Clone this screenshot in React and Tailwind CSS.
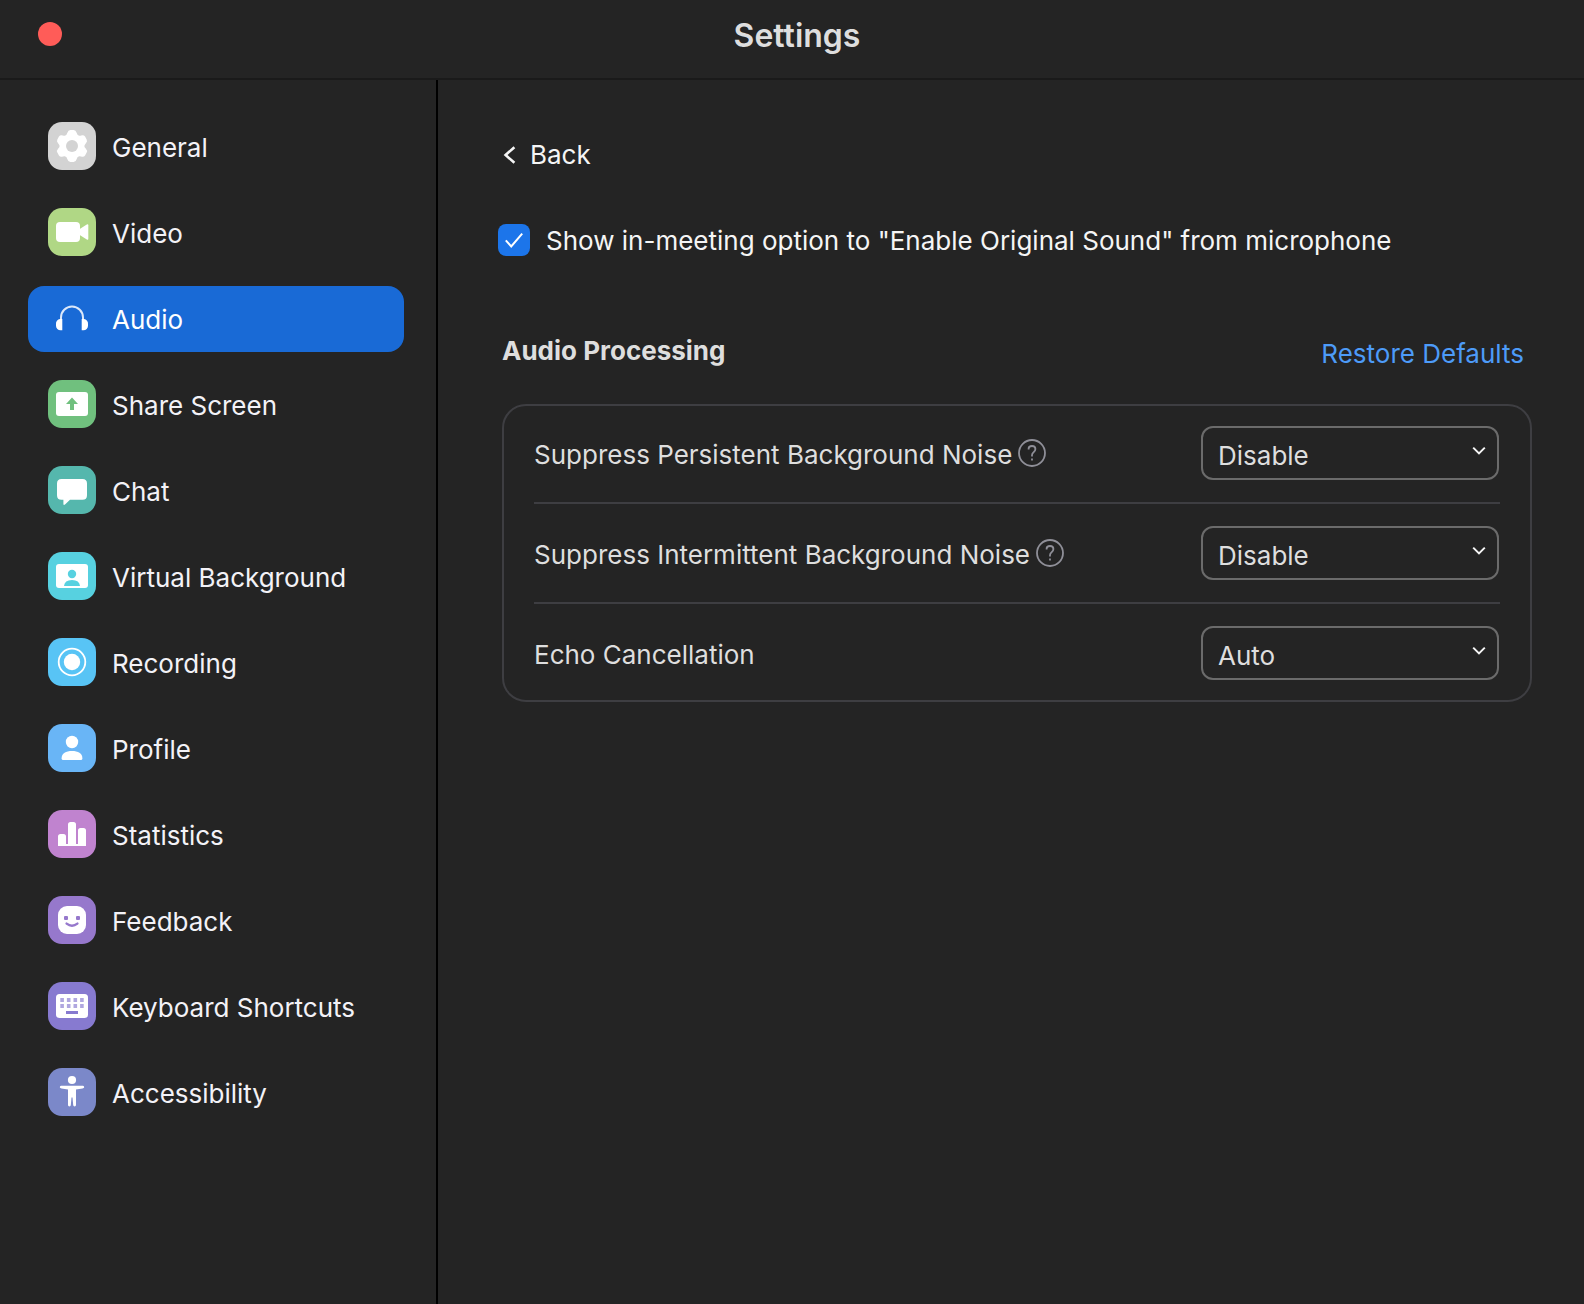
import React, { useState } from "react";

const navItems = [
  { name: "General", color: "bg-[#d3d3d3]", icon: GeneralIcon },
  { name: "Video", color: "bg-[#b0d785]", icon: VideoIcon },
  { name: "Audio", color: "bg-transparent", icon: AudioIcon },
  { name: "Share Screen", color: "bg-[#70c07e]", icon: ShareIcon },
  { name: "Chat", color: "bg-[#55b7ad]", icon: ChatIcon },
  { name: "Virtual Background", color: "bg-[#57d1e0]", icon: BackgroundIcon },
  { name: "Recording", color: "bg-[#58c4f5]", icon: RecordingIcon },
  { name: "Profile", color: "bg-[#69b5f6]", icon: ProfileIcon },
  { name: "Statistics", color: "bg-[#c083cf]", icon: StatisticsIcon },
  { name: "Feedback", color: "bg-[#9678cc]", icon: FeedbackIcon },
  { name: "Keyboard Shortcuts", color: "bg-[#877ad0]", icon: KeyboardIcon },
  { name: "Accessibility", color: "bg-[#7b88c9]", icon: AccessibilityIcon },
];

const audioOptions = [
  {
    id: "persistent-noise",
    label: "Suppress Persistent Background Noise",
    help: true,
    choices: ["Disable", "Auto", "Moderate", "Aggressive"],
  },
  {
    id: "intermittent-noise",
    label: "Suppress Intermittent Background Noise",
    help: true,
    choices: ["Disable", "Auto", "Moderate", "Aggressive"],
  },
  {
    id: "echo-cancellation",
    label: "Echo Cancellation",
    help: false,
    choices: ["Auto", "Aggressive"],
  },
];

const defaultValues = {
  "persistent-noise": "Disable",
  "intermittent-noise": "Disable",
  "echo-cancellation": "Auto",
};

function Icon({ children }) {
  return (
    <svg className="h-12 w-12" viewBox="0 0 48 48" fill="white" aria-hidden="true">
      {children}
    </svg>
  );
}

function GeneralIcon() {
  return (
    <Icon>
      {[0, 60, 120, 180, 240, 300].map((angle) => (
        <path
          key={angle}
          transform={`rotate(${angle} 24 24)`}
          d="M16.5 14.5 Q18.8 13.2 19.4 10.8 Q20.2 8 22.4 8 H25.6 Q27.8 8 28.6 10.8 Q29.2 13.2 31.5 14.5 L24 24 Z"
        />
      ))}
      <circle cx="24" cy="24" r="12" />
      <circle cx="24" cy="24" r="6" fill="#d3d3d3" />
    </Icon>
  );
}

function VideoIcon() {
  return (
    <Icon>
      <rect x="8" y="14" width="24" height="20" rx="4" />
      <path d="M31 21.5 L38.8 16.5 Q40.3 15.6 40.3 17.2 V30.8 Q40.3 32.4 38.8 31.5 L31 26.5 Z" />
    </Icon>
  );
}

function AudioIcon() {
  return (
    <Icon>
      <path
        d="M13 26 V23.5 A11 11 0 0 1 35 23.5 V26"
        fill="none"
        stroke="#dbe8fa"
        strokeWidth="2"
      />
      <path d="M14.3 25 V36.2 H12.5 A4.5 4.5 0 0 1 8 31.7 V30 A4.5 4.5 0 0 1 12 25 Z" />
      <path d="M33.7 25 V36.2 H35.5 A4.5 4.5 0 0 0 40 31.7 V30 A4.5 4.5 0 0 0 36 25 Z" />
    </Icon>
  );
}

function ShareIcon() {
  return (
    <Icon>
      <rect x="8" y="12" width="32" height="24" rx="3" />
      <path d="M24 17.5 L30 24 H26 V30 H22 V24 H18 Z" fill="#70c07e" />
    </Icon>
  );
}

function ChatIcon() {
  return (
    <Icon>
      <path d="M13.5 13 H34.5 Q39 13 39 17.5 V29.3 Q39 33.8 34.5 33.8 H22 L17 38.6 Q15.4 39.8 15.4 37.8 V33.8 H13.5 Q9 33.8 9 29.3 V17.5 Q9 13 13.5 13 Z" />
    </Icon>
  );
}

function BackgroundIcon() {
  return (
    <Icon>
      <rect x="8" y="12" width="32" height="24" rx="3" />
      <circle cx="24" cy="22" r="4.2" fill="#57d1e0" />
      <path d="M16 34 Q16.5 28 24 28 Q31.5 28 32 34 Z" fill="#57d1e0" />
    </Icon>
  );
}

function RecordingIcon() {
  return (
    <Icon>
      <circle cx="24" cy="24" r="13.3" fill="none" stroke="white" strokeWidth="1.8" />
      <circle cx="24" cy="24" r="8.2" />
    </Icon>
  );
}

function ProfileIcon() {
  return (
    <Icon>
      <circle cx="24" cy="18" r="6.2" />
      <path d="M13.6 34.4 C13.6 29 18 27 24 27 C30 27 34.4 29 34.4 34.4 Q34.4 36 32.8 36 H15.2 Q13.6 36 13.6 34.4 Z" />
    </Icon>
  );
}

function StatisticsIcon() {
  return (
    <Icon>
      <path d="M10 36 V26.5 Q10 24 12.5 24 H15.5 Q18 24 18 26.5 V34 H20 V14.5 Q20 12 22.5 12 H25.5 Q28 12 28 14.5 V34 H30 V20.5 Q30 18 32.5 18 H35.5 Q38 18 38 20.5 V36 Z" />
    </Icon>
  );
}

function FeedbackIcon() {
  return (
    <Icon>
      <rect x="10" y="10" width="28" height="28" rx="9" />
      <rect x="16" y="20" width="4" height="4" rx="1" fill="#9678cc" />
      <rect x="28" y="20" width="4" height="4" rx="1" fill="#9678cc" />
      <path
        d="M18.6 27.6 Q24 31.8 29.4 27.6"
        fill="none"
        stroke="#9678cc"
        strokeWidth="2.4"
        strokeLinecap="round"
      />
    </Icon>
  );
}

function KeyboardIcon() {
  return (
    <Icon>
      <rect x="8" y="12" width="32" height="24" rx="3.5" />
      <g fill="#b0a7e0">
        {[16, 22].map((y) =>
          [12.3, 18.9, 25.5, 32.1].map((x) => (
            <rect key={`${x}-${y}`} x={x} y={y} width="3.6" height="4" />
          ))
        )}
      </g>
      <rect x="18" y="29" width="12" height="3" fill="#877ad0" />
    </Icon>
  );
}

function AccessibilityIcon() {
  return (
    <Icon>
      <circle cx="24" cy="12" r="4.1" />
      <path d="M13 17.8 H35 Q36.2 18 36.2 19.2 Q36 20.2 34.5 20.4 L28 21.6 V37 Q28 38.4 26.6 38.4 Q25.2 38.4 25.2 37 L24.5 29.5 H23.5 L22.8 37 Q22.8 38.4 21.4 38.4 Q20 38.4 20 37 V21.6 L13.5 20.4 Q12 20.2 11.8 19.2 Q11.8 18 13 17.8 Z" />
    </Icon>
  );
}

function HelpIcon() {
  return (
    <svg
      className="h-7 w-7"
      viewBox="0 0 28 28"
      fill="none"
      stroke="#8f8f98"
      strokeWidth="1.8"
      aria-hidden="true"
    >
      <circle cx="14" cy="14" r="13" />
      <path d="M10.6 10.6 V9.8 Q10.6 7 14 7 Q17.4 7 17.4 10 Q17.4 12 15.6 13.2 Q14 14.3 14 16.2 V17.4" />
      <path d="M14 19.6 V21.6" />
    </svg>
  );
}

export default function App() {
  const [active, setActive] = useState("Audio");
  const [originalSound, setOriginalSound] = useState(true);
  const [values, setValues] = useState(defaultValues);

  const handleChange = (id, value) => {
    setValues((prev) => ({ ...prev, [id]: value }));
  };

  return (
    <div className="min-h-screen flex flex-col bg-[#242424] font-['Inter',sans-serif] text-[26px] leading-8 text-[#f3f2f7]">
      {/* Title bar */}
      <header className="flex items-center border-b-2 border-[#1a1a1a] pl-[38px] pr-[52px] pt-3 pb-[22px]">
        <button aria-label="Close" className="h-6 w-6 rounded-full bg-[#ff5c58]" />
        <h1 className="flex-1 pt-1 text-center text-[32px] leading-10 font-semibold text-[#dedede]">
          Settings
        </h1>
      </header>

      <div className="flex-1 flex">
        {/* Sidebar */}
        <nav className="w-[438px] shrink-0 border-r-2 border-black pt-[34px] pl-7 pr-8">
          <ul className="flex flex-col gap-5">
            {navItems.map(({ name, color, icon: NavIcon }) => (
              <li key={name}>
                <button
                  onClick={() => setActive(name)}
                  aria-current={active === name ? "page" : undefined}
                  className={`w-full flex items-center gap-4 rounded-2xl px-5 pt-2 pb-2.5 text-left ${
                    active === name ? "bg-[#196ad6] text-white" : ""
                  }`}
                >
                  <span className={`shrink-0 rounded-[14px] ${color}`}>
                    <NavIcon />
                  </span>
                  <span className="pt-1">{name}</span>
                </button>
              </li>
            ))}
          </ul>
        </nav>

        {/* Main Content */}
        <main className="flex-1 min-w-0 pt-[59px] pl-[60px] pr-[52px]">
          <button className="flex items-center gap-3 pl-1 text-[#f5f5f5]">
            <svg
              className="h-[18px] w-4"
              viewBox="0 0 16 18"
              fill="none"
              stroke="currentColor"
              strokeWidth="2.6"
              aria-hidden="true"
            >
              <path d="M12.4 1.2 L3.6 9 L12.4 16.8" />
            </svg>
            Back
          </button>

          <label className="mt-[53px] flex items-center gap-4 text-[#f5f5f5]">
            <span className="-my-1 grid shrink-0">
              <input
                type="checkbox"
                checked={originalSound}
                onChange={(e) => setOriginalSound(e.target.checked)}
                className="col-start-1 row-start-1 h-8 w-8 appearance-none rounded-lg border-2 border-[#6b6b6b] checked:border-0 checked:bg-[#1c75ea]"
              />
              {originalSound && (
                <svg
                  className="pointer-events-none col-start-1 row-start-1 h-8 w-8"
                  viewBox="0 0 32 32"
                  fill="none"
                  stroke="white"
                  strokeWidth="2"
                  aria-hidden="true"
                >
                  <path d="M7.8 16.4 L13.2 22.4 L24.2 9.6" />
                </svg>
              )}
            </span>
            <span className="pt-0.5 leading-[30px]">
              Show in-meeting option to "Enable Original Sound" from microphone
            </span>
          </label>

          <section className="mt-[79px] pl-1">
            <div className="flex items-start justify-between pr-2">
              <h2 className="font-bold text-[#dedede]">Audio Processing</h2>
              <button
                onClick={() => setValues(defaultValues)}
                className="leading-[38px] text-[#4d9bf8]"
              >
                Restore Defaults
              </button>
            </div>

            <div className="mt-[31px] flex flex-col gap-[22px] rounded-3xl border-2 border-[#3e3e42] px-[30px] py-5 text-[#dedede]">
              {audioOptions.map((option, index) => (
                <div
                  key={option.id}
                  className={`flex items-center justify-between pr-px ${
                    index > 0 ? "border-t-2 border-[#3e3e42] pt-[22px]" : ""
                  }`}
                >
                  <div className="flex items-center gap-1.5">
                    <label htmlFor={option.id} className="pt-1">
                      {option.label}
                    </label>
                    {option.help && (
                      <button aria-label={`About ${option.label}`}>
                        <HelpIcon />
                      </button>
                    )}
                  </div>
                  <div className="relative">
                    <select
                      id={option.id}
                      value={values[option.id]}
                      onChange={(e) => handleChange(option.id, e.target.value)}
                      className="block h-[54px] w-[298px] appearance-none rounded-xl border-2 border-[#6b6b6b] bg-[#242424] pt-1.5 pl-[15px] pr-10"
                    >
                      {option.choices.map((choice) => (
                        <option key={choice}>{choice}</option>
                      ))}
                    </select>
                    <svg
                      className="pointer-events-none absolute top-5 right-3 h-3 w-4"
                      viewBox="0 0 16 12"
                      fill="none"
                      stroke="#f5f5f5"
                      strokeWidth="2"
                      aria-hidden="true"
                    >
                      <path d="M2.2 1.6 L8 7.4 L13.8 1.6" />
                    </svg>
                  </div>
                </div>
              ))}
            </div>
          </section>
        </main>
      </div>
    </div>
  );
}
